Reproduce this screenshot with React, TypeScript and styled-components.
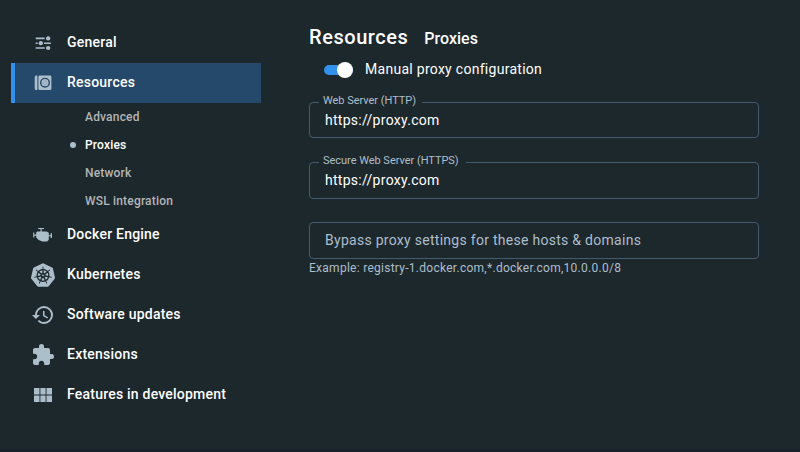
import React from "react";
import styled, { createGlobalStyle } from "styled-components";
import { MdHistory, MdExtension } from "react-icons/md";
import { SiKubernetes } from "react-icons/si";

const GlobalStyle = createGlobalStyle`
  * { box-sizing: border-box; }
  body {
    margin: 0;
    background: #1d282d;
    color: #fff;
    font-family: Roboto, sans-serif;
    overflow: hidden;
  }
`;

const Window = styled.div`
  display: flex;
  width: 800px;
  height: 452px;
  background: #1d282d;
  border-bottom: 3px solid #19222a;
`;

const Sidebar = styled.nav`
  width: 261px;
  padding: 23px 0 0 11px;
`;

const NavItem = styled.div<{ $active?: boolean }>`
  display: flex;
  align-items: center;
  height: 40px;
  padding-left: ${(p) => (p.$active ? 16 : 20)}px;
  border-left: ${(p) => (p.$active ? "4px solid #3391ee" : "0")};
  background: ${(p) => (p.$active ? "#24496a" : "transparent")};
`;

const IconBox = styled.span`
  display: flex;
  align-items: center;
  justify-content: center;
  width: 24px;
  height: 24px;
  margin-right: 12px;
  color: #adbecb;

  svg { display: block; flex: none; }
`;

const NavLabel = styled.span`
  font-size: 14px;
  font-weight: 500;
  line-height: 20px;
  letter-spacing: 0.22px;
  padding-bottom: 2px;
  white-space: nowrap;
`;

const SubItem = styled.div<{ $active?: boolean }>`
  display: flex;
  align-items: center;
  height: 28px;
  padding-left: 59px;
  font-size: 12px;
  font-weight: 500;
  letter-spacing: 0.18px;
  color: ${(p) => (p.$active ? "#fff" : "#b3b5b6")};

  &::before {
    content: "";
    width: 6px;
    height: 6px;
    margin-right: 9px;
    border-radius: 50%;
    background: ${(p) => (p.$active ? "#adbecb" : "transparent")};
  }
`;

const Main = styled.main`
  width: 450px;
  margin-left: 48px;
  padding-top: 23px;
`;

const Heading = styled.header`
  display: flex;
  align-items: baseline;
  height: 34px;
  gap: 16px;
`;

const Title = styled.h1`
  margin: 0;
  font-size: 20px;
  font-weight: 500;
  line-height: 28px;
  letter-spacing: 0.55px;
`;

const Subtitle = styled.h2`
  margin: 0;
  font-size: 16px;
  font-weight: 500;
  letter-spacing: 0;
`;

const ToggleRow = styled.label`
  display: flex;
  align-items: center;
  height: 24px;
  padding-left: 15px;
  font-size: 14px;
  letter-spacing: 0.28px;
`;

const Track = styled.span`
  display: flex;
  align-items: center;
  justify-content: flex-end;
  width: 29px;
  height: 10px;
  margin: 2px 12px 0 0;
  border-radius: 5px;
  background: #3391ee;
`;

const Thumb = styled.span`
  width: 16px;
  height: 16px;
  border-radius: 50%;
  background: #fff;
`;

const Form = styled.form`
  display: flex;
  flex-direction: column;
`;

const Field = styled.fieldset<{ $height: number; $gap: number }>`
  min-width: 0;
  height: ${(p) => p.$height}px;
  margin: ${(p) => p.$gap}px 0 0;
  padding: 0 15px;
  border: 1px solid #455c6e;
  border-radius: 4px;
`;

const Legend = styled.legend<{ $width: number }>`
  width: ${(p) => p.$width}px;
  height: 12px;
  margin-left: -6px;
  padding: 0 0 0 4px;
  font-size: 11px;
  line-height: 9px;
  letter-spacing: -0.03px;
  color: #adbecb;
  white-space: nowrap;
`;

const Value = styled.div`
  font-size: 14px;
  line-height: 20px;
  letter-spacing: 0.28px;
  margin-top: 2px;
`;

const Placeholder = styled(Value)`
  margin-top: 7px;
  color: #adbecb;
`;

const Hint = styled.div`
  margin-top: 1px;
  font-size: 12px;
  line-height: 16px;
  letter-spacing: 0.27px;
  color: #adbecb;
`;

const TuneIcon = () => (
  <svg width="24" height="24" viewBox="0 0 24 24" fill="currentColor">
    <path d="M4.7 6.6h9v1.6h-9zM4.7 11.4h2v1.6h-2zM13 11.4h6.9v1.6H13zM4.7 16.2h9v1.6h-9z" />
    <path d="M8 11.4h4v1.6H8zM15 6.6h4v1.6h-4zM15 16.2h4v1.6h-4z" />
    <circle cx="17.2" cy="7.4" r="2.1" />
    <circle cx="9.8" cy="12.2" r="2.1" />
    <circle cx="17.2" cy="17" r="2.1" />
  </svg>
);

const DiskIcon = () => (
  <svg width="24" height="24" viewBox="0 0 24 24" fill="currentColor">
    <path d="M6.4 4.5v14.6H5.2a1.5 1.5 0 0 1-1.5-1.5V6a1.5 1.5 0 0 1 1.5-1.5z" />
    <rect x="7.4" y="4.5" width="13" height="14.6" rx="1.4" />
    <circle cx="14" cy="11.7" r="4.3" fill="none" stroke="#24496a" strokeWidth="1.4" />
    <circle cx="14" cy="11.7" r="1.9" fill="none" stroke="#8299ad" strokeWidth="0.6" />
  </svg>
);

const EngineIcon = () => (
  <svg width="24" height="24" viewBox="0 0 24 24" fill="currentColor">
    <path d="M7.2 5.1h5.8v1h-2.3v2.3h4.8l2.3 1.3v2.6h1.8v-2H21V15h-1.4v-1.7h-1.8v3.5L16 18.5h-4.5L7.6 17l-2.4-2.6v-1.6H3.3v1.8H2.2V9.4h1.1v2h1.9V9.6l1-1.2h3.3V6.1H7.2z" />
  </svg>
);

const GridIcon = () => (
  <svg width="24" height="24" viewBox="0 0 24 24" fill="currentColor">
    <path d="M3 5h5.5v6.4H3zM9.4 5h5.2v6.4H9.4zM15.5 5H21v6.4h-5.5zM3 12.4h5.5V19H3zM9.4 12.4h5.2V19H9.4zM15.5 12.4H21V19h-5.5z" />
  </svg>
);

const App = () => (
  <>
    <GlobalStyle />
    <Window>
      <Sidebar>
        <NavItem><IconBox><TuneIcon /></IconBox><NavLabel>General</NavLabel></NavItem>
        <NavItem $active><IconBox><DiskIcon /></IconBox><NavLabel>Resources</NavLabel></NavItem>
        <SubItem>Advanced</SubItem>
        <SubItem $active>Proxies</SubItem>
        <SubItem>Network</SubItem>
        <SubItem>WSL integration</SubItem>
        <NavItem><IconBox><EngineIcon /></IconBox><NavLabel>Docker Engine</NavLabel></NavItem>
        <NavItem><IconBox><SiKubernetes size={24} /></IconBox><NavLabel>Kubernetes</NavLabel></NavItem>
        <NavItem><IconBox><MdHistory size={24} /></IconBox><NavLabel>Software updates</NavLabel></NavItem>
        <NavItem><IconBox><MdExtension size={24} /></IconBox><NavLabel>Extensions</NavLabel></NavItem>
        <NavItem><IconBox><GridIcon /></IconBox><NavLabel>Features in development</NavLabel></NavItem>
      </Sidebar>
      <Main>
        <Heading>
          <Title>Resources</Title>
          <Subtitle>Proxies</Subtitle>
        </Heading>
        <ToggleRow>
          <Track><Thumb /></Track>
          Manual proxy configuration
        </ToggleRow>
        <Form>
          <Field $height={42} $gap={15}>
            <Legend $width={103}>Web Server (HTTP)</Legend>
            <Value>https://proxy.com</Value>
          </Field>
          <Field $height={43} $gap={18}>
            <Legend $width={147}>Secure Web Server (HTTPS)</Legend>
            <Value>https://proxy.com</Value>
          </Field>
          <Field $height={37} $gap={23}>
            <Placeholder>Bypass proxy settings for these hosts &amp; domains</Placeholder>
          </Field>
          <Hint>Example: registry-1.docker.com,*.docker.com,10.0.0.0/8</Hint>
        </Form>
      </Main>
    </Window>
  </>
);

export default App;
